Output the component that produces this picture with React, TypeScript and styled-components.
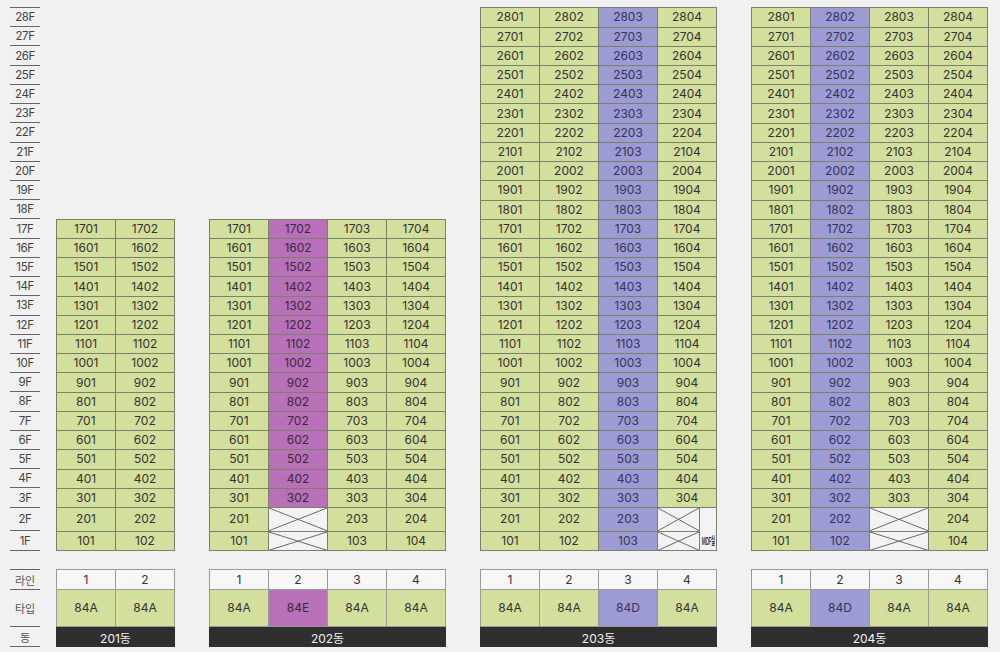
import React from 'react';
import styled, { createGlobalStyle } from 'styled-components';

const GlobalStyle = createGlobalStyle`
  html, body { margin: 0; padding: 0; background: #f1f1f1; }
  body { font-family: 'Inter', 'Noto Sans CJK KR', sans-serif; color: #333; }
`;

type Tone = 'green' | 'purple' | 'magenta' | 'white';
const toneBg: Record<Tone, string> = {
  green: '#d3df9d',
  purple: '#9c9bd3',
  magenta: '#b870b9',
  white: '#f7f7f7',
};

interface Building {
  name: string;
  floors: number;
  lines: Tone[];
  types: string[];
  voidLine?: number;
  mdf?: boolean;
}

const buildings: Building[] = [
  { name: '201동', floors: 17, lines: ['green', 'green'], types: ['84A', '84A'] },
  { name: '202동', floors: 17, lines: ['green', 'magenta', 'green', 'green'], types: ['84A', '84E', '84A', '84A'], voidLine: 2 },
  { name: '203동', floors: 28, lines: ['green', 'green', 'purple', 'green'], types: ['84A', '84A', '84D', '84A'], voidLine: 4, mdf: true },
  { name: '204동', floors: 28, lines: ['green', 'purple', 'green', 'green'], types: ['84A', '84D', '84A', '84A'], voidLine: 3 },
];

const PITCH = 500 / 26;
const MAX_FLOORS = 28;
const AREA_H = 1 + (MAX_FLOORS - 2) * PITCH + 23.7 + 19.3;

const Page = styled.div`
  display: flex;
  align-items: flex-start;
  padding: 7px 0 0 10px;
`;

const LabelColumn = styled.div`
  width: 30px;
  display: flex;
  flex-direction: column;
`;

const FloorLabelArea = styled.div`
  height: ${AREA_H}px;
  display: flex;
  flex-direction: column;
  border-top: 1px solid #666;
  box-sizing: border-box;
`;

const FloorLabel = styled.div<{ $h: number }>`
  height: ${(p) => p.$h}px;
  box-sizing: border-box;
  border-bottom: 1px solid #666;
  display: flex;
  align-items: center;
  justify-content: center;
  font-size: 11.5px;
  color: #444;
  letter-spacing: -0.4px;
`;

const InfoLabelArea = styled.div`
  margin-top: 18px;
  border-top: 1px solid #666;
  display: flex;
  flex-direction: column;
`;

const InfoLabel = styled.div<{ $h: number }>`
  height: ${(p) => p.$h}px;
  box-sizing: border-box;
  border-bottom: 1px solid #666;
  display: flex;
  align-items: center;
  justify-content: center;
  font-size: 11px;
  color: #555;
`;

const BuildingsRow = styled.div`
  display: flex;
  gap: 34px;
  margin-left: 16px;
`;

const BuildingColumn = styled.div`
  display: flex;
  flex-direction: column;
`;

const FloorArea = styled.div`
  height: ${AREA_H}px;
  display: flex;
  flex-direction: column;
  justify-content: flex-end;
`;

const FloorGrid = styled.div<{ $cols: string; $rows: string }>`
  display: grid;
  grid-template-columns: ${(p) => p.$cols};
  grid-template-rows: ${(p) => p.$rows};
  gap: 1px;
  padding: 1px;
  background: #7c8068;
`;

const Unit = styled.div<{ $tone: Tone; $span?: number }>`
  background: ${(p) => toneBg[p.$tone]};
  grid-column: span ${(p) => p.$span || 1};
  display: flex;
  align-items: center;
  justify-content: center;
  font-size: 12px;
  color: ${(p) => (p.$tone === 'purple' ? '#34345a' : p.$tone === 'magenta' ? '#3a2a3a' : '#333')};
  line-height: 1;
`;

const VoidCell = styled.div`
  background: #f3f3f3;
  position: relative;
  svg { display: block; width: 100%; height: 100%; }
`;

const MdfCell = styled.div<{ $row: number }>`
  grid-column: 5;
  grid-row: ${(p) => p.$row} / span 2;
  background: #f3f3f3;
  display: flex;
  align-items: flex-end;
  justify-content: center;
  padding-bottom: 3px;
  overflow: hidden;
`;

const MdfText = styled.span`
  display: inline-block;
  white-space: nowrap;
  font-size: 11px;
  font-weight: 600;
  color: #333;
  transform: scaleX(0.4);
  letter-spacing: -0.5px;
  line-height: 1;
`;

const InfoTable = styled.div<{ $cols: number }>`
  margin-top: 18px;
  display: grid;
  grid-template-columns: repeat(${(p) => p.$cols}, 58px);
  grid-template-rows: 19px 36px 19px;
  gap: 1px;
  padding: 1px;
  background: #9a9a9a;
`;

const LineCell = styled.div`
  background: #f7f7f7;
  display: flex;
  align-items: center;
  justify-content: center;
  font-size: 12px;
  color: #333;
`;

const TypeCell = styled(Unit)`
  font-size: 12px;
`;

const NameBar = styled.div<{ $cols: number }>`
  grid-column: 1 / span ${(p) => p.$cols};
  background: #2f2f2f;
  color: #f2f2f2;
  display: flex;
  align-items: center;
  justify-content: center;
  font-size: 12px;
  margin: 0 -1px -1px;
`;

const Cross = () => (
  <svg viewBox="0 0 100 100" preserveAspectRatio="none">
    <line x1="0" y1="0" x2="100" y2="100" stroke="#6a6a6a" strokeWidth="1" vectorEffect="non-scaling-stroke" />
    <line x1="100" y1="0" x2="0" y2="100" stroke="#6a6a6a" strokeWidth="1" vectorEffect="non-scaling-stroke" />
  </svg>
);

const rowHeights = (floors: number) => {
  const hs: number[] = [];
  for (let f = floors; f >= 1; f--) {
    if (f === 2) hs.push(23.7);
    else if (f === 1) hs.push(19.3);
    else hs.push(PITCH);
  }
  return hs;
};

const BuildingBlock: React.FC<{ b: Building }> = ({ b }) => {
  const n = b.lines.length;
  const cols = b.mdf ? 'repeat(3, 58px) 41px 16px' : `repeat(${n}, 58px)`;
  const rows = `repeat(${b.floors - 2}, ${PITCH - 1}px) 22.7px 18.3px`;
  const cells: React.ReactNode[] = [];
  for (let f = b.floors; f >= 1; f--) {
    b.lines.forEach((tone, i) => {
      const line = i + 1;
      const key = `${f}-${line}`;
      if (f <= 2 && b.voidLine === line) {
        cells.push(
          <VoidCell key={key}>
            <Cross />
          </VoidCell>
        );
      } else {
        const span = b.mdf && line === 4 ? 2 : 1;
        cells.push(
          <Unit key={key} $tone={tone} $span={span}>
            {`${f}${String(line).padStart(2, '0')}`}
          </Unit>
        );
      }
    });
  }
  if (b.mdf) {
    cells.push(
      <MdfCell key="mdf" $row={b.floors - 1}>
        <MdfText>MDF실</MdfText>
      </MdfCell>
    );
  }
  return (
    <BuildingColumn>
      <FloorArea>
        <FloorGrid $cols={cols} $rows={rows}>
          {cells}
        </FloorGrid>
      </FloorArea>
      <InfoTable $cols={n}>
        {b.lines.map((_, i) => (
          <LineCell key={`l${i}`}>{i + 1}</LineCell>
        ))}
        {b.lines.map((tone, i) => (
          <TypeCell key={`t${i}`} $tone={tone}>
            {b.types[i]}
          </TypeCell>
        ))}
        <NameBar $cols={n}>{b.name}</NameBar>
      </InfoTable>
    </BuildingColumn>
  );
};

export default function App() {
  const hs = rowHeights(MAX_FLOORS);
  return (
    <>
      <GlobalStyle />
      <Page>
        <LabelColumn>
          <FloorLabelArea>
            {hs.map((h, i) => (
              <FloorLabel key={i} $h={h}>
                {MAX_FLOORS - i}F
              </FloorLabel>
            ))}
          </FloorLabelArea>
          <InfoLabelArea>
            <InfoLabel $h={20}>라인</InfoLabel>
            <InfoLabel $h={37}>타입</InfoLabel>
            <InfoLabel $h={20}>동</InfoLabel>
          </InfoLabelArea>
        </LabelColumn>
        <BuildingsRow>
          {buildings.map((b) => (
            <BuildingBlock key={b.name} b={b} />
          ))}
        </BuildingsRow>
      </Page>
    </>
  );
}
